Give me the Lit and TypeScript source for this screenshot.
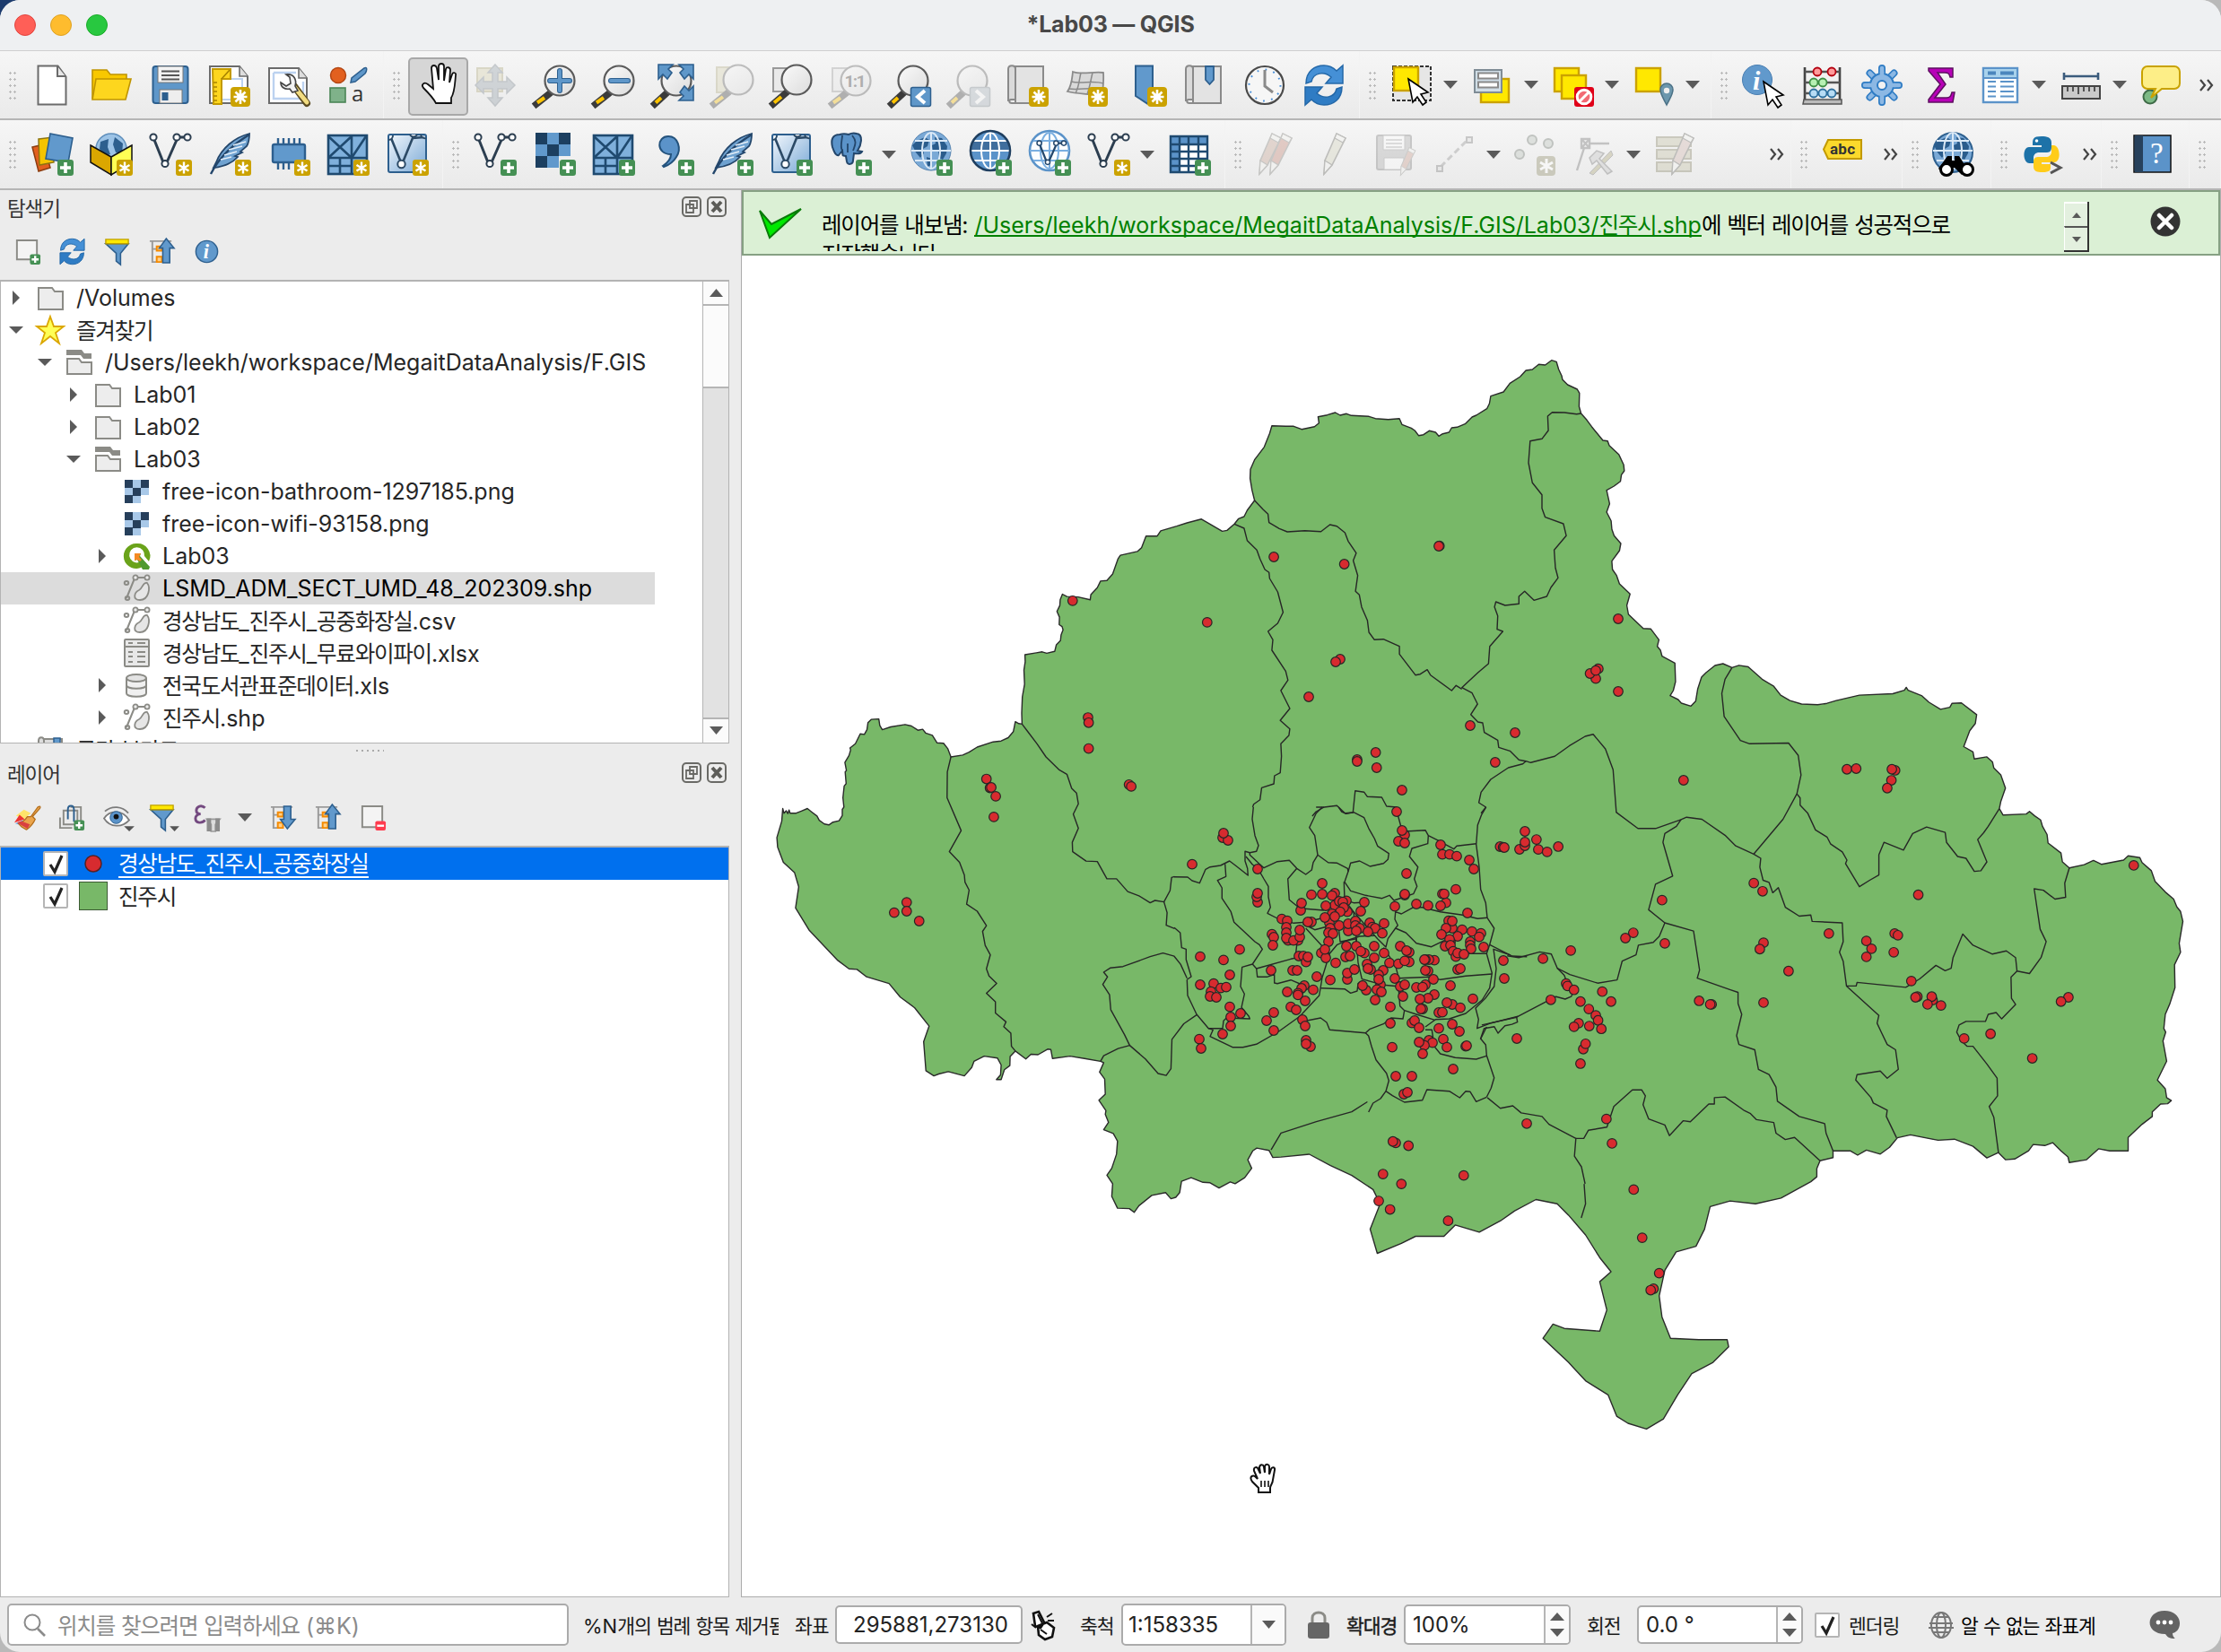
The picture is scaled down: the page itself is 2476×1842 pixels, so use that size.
import { LitElement, html, svg, css } from "lit";
import { customElement } from "lit/decorators.js";

/* ---------- text helper: Hangul runs get their own metrics ---------- */
const ko = (s: string) =>
  s.split(/([\u3131-\uD79D]+)/).filter(Boolean).map((p) => (/[\u3131-\uD79D]/.test(p) ? html`<span class="k">${p}</span>` : p));

/* ---------- badges ---------- */
const plus = svg`<g><rect x="30" y="30" width="18" height="18" rx="3" fill="#459054"/><path d="M39 33v12M33 39h12" stroke="#fff" stroke-width="3.6"/></g>`;
const star = svg`<g><rect x="30" y="30" width="18" height="18" rx="3" fill="#cba200"/><path d="M39 32.5v13M33.5 36l11 6.500M44.500 36l-11 6.500" stroke="#fff" stroke-width="2.400"/></g>`;
const bigStar = svg`<g><rect x="25" y="26" width="22" height="22" rx="4" fill="#cba200"/><circle cx="36" cy="37" r="4" fill="#fff"/><path d="M36 29v4M36 41v4M28.500 37h4M39.500 37h4M30.500 31.500l3 3M38.500 39.500l3 3M41.500 31.500l-3 3M33.500 39.500l-3 3" stroke="#fff" stroke-width="2.600"/></g>`;

const lens = (inner: unknown = "", cx = 30, cy = 19) => svg`
  <path d="M${cx - 11} ${cy + 14}L4 45" stroke="#3b3b3b" stroke-width="7.500" stroke-linecap="square"/>
  <path d="M${cx - 17} ${cy + 19}L5 43.500" stroke="#ffc400" stroke-width="4"/>
  <circle cx="${cx}" cy="${cy}" r="16.500" fill="url(#lensg)" stroke="#5a5a5a" stroke-width="2.200"/>${inner}`;
const veeLine = (c = "#2c3e50") => svg`
  <path d="M6 8L16 33M20 33L31 8M31 5h9" stroke="${c}" stroke-width="3" fill="none"/>
  <g fill="#fff" stroke="${c}" stroke-width="2"><circle cx="5" cy="5" r="3.600"/><circle cx="31" cy="5" r="3.600"/><circle cx="43" cy="5" r="3.600"/><circle cx="18" cy="34.500" r="3.600"/></g>`;
const feather = svg`
  <path d="M46 1C30 5 15 17 9 33l-3 6c9-1 20-4 27-12l-3-1 8-4-2-1 7-6C46 10 46 5 46 1z" fill="#6fa2d0" stroke="#23466b" stroke-width="1.800"/>
  <path d="M46 2C28 13 12 28 3 46" stroke="#23466b" stroke-width="2.400" fill="none"/>
  <path d="M18 25l14-4M23 19l15-4M28 14l14-4M14 30l12-3" stroke="#e4eef8" stroke-width="1.600"/>`;
const mesh = svg`
  <rect x="2" y="3" width="43" height="43" fill="#7fb0dc" stroke="#1f4a70" stroke-width="2.600"/>
  <path d="M2 28h43M28 3v43M2 4l26 24M28 4L2 28M44 4L28 28M15 28v18M2 37h26" stroke="#1f4a70" stroke-width="2.600" fill="none"/>`;
const boxVee = svg`<rect x="3" y="2" width="42" height="42" rx="2" fill="url(#bluebox)" stroke="#2d5f8e" stroke-width="2"/>
  <path d="M6 6l11 27M19 33L30 6l13-1" stroke="#2c4a66" stroke-width="2.600" fill="none"/>
  <g fill="#fff" stroke="#2c4a66" stroke-width="2"><path d="M3 8a5 5 0 005-5M27 2a4.500 4.500 0 008 0M39 2a5 5 0 006 4" /><circle cx="17.500" cy="35" r="4.200"/></g>`;
const globeGrid = (c: string) => svg`<g fill="none" stroke="${c}" stroke-width="2"><ellipse cx="24" cy="20" rx="10" ry="20"/><path d="M24 0v40M2 20h44M6 9h36M6 31h36"/></g>`;
const land = svg`<path d="M8 9l9-4 5 3-2 7-5 3 1 5-4 5-5-6-4-8zM28 5l8 1 6 9-1 8-4 7-4-2-1-7-6-1-1-6 4-2zM19 27l6 2-1 7-4 2z" fill="#2a5c8c"/>`;
const recycle = svg`
  <path d="M4 22C4 8 14 2 24 2c7 0 11 3 14 6l7-6v20H26l6-7c-8-7-20-5-22 5z" fill="#4590d6" stroke="#2468a8" stroke-width="1.500"/>
  <path d="M44 26c0 14-10 20-20 20-7 0-11-3-14-6l-7 6V26h19l-6 7c8 7 20 5 22-5z" fill="#2f7cc4" stroke="#2468a8" stroke-width="1.500"/>`;
const scroll = svg`<path d="M10 3h31v41H10z" fill="#e3e3e3" stroke="#8a8a8a" stroke-width="2"/><path d="M2 42V6c0-5 8-5 8 0v34H5c-2 0-3 4 1 4h6" fill="#dadada" stroke="#8a8a8a" stroke-width="2"/>`;
const cursor = (x: number, y: number) => svg`<path transform="translate(${x} ${y})" d="M0 0l22 15-8 2 6 9-4 3-6-9-5 6z" fill="#fff" stroke="#000" stroke-width="1.600"/>`;
const hourPencil = (x: number, c: string) => svg`<path transform="translate(${x} 0)" d="M18 1l10 5-15 30-9 10 1-15z" fill="${c}" stroke="#8b8b86" stroke-width="1.600"/><path transform="translate(${x} 0)" d="M18 1l-2 5 9 5 3-5zM5 31l-1 15 9-10z" fill="#f3f3f0" stroke="#8b8b86" stroke-width="1.200"/>`;

const icons: Record<string, unknown> = {
  newdoc: svg`<path d="M8.500 2.500h22l9 12v31h-31z" fill="#fff" stroke="#6b6b6b" stroke-width="2"/><path d="M30 3v11h9" fill="#e6e6e6" stroke="#6b6b6b" stroke-width="2"/>`,
  open: svg`<path d="M3 7h16l4 5h18v8H8L3 39z" fill="#f8c800" stroke="#bf9400" stroke-width="1.600"/><path d="M7 17h39l-6 23H3z" fill="#fdd61e" stroke="#bf9400" stroke-width="1.600"/>`,
  save: svg`<rect x="4.500" y="3" width="39" height="41" rx="3" fill="#5f97c9" stroke="#2d5f8e" stroke-width="2"/><rect x="10" y="3" width="28" height="18" fill="#f3f3f3" stroke="#777"/><path d="M14 8.500h20M14 13h20M14 17.500h20" stroke="#555" stroke-width="2"/><rect x="12" y="29" width="25" height="15" fill="#eee" stroke="#777"/><rect x="14.500" y="32" width="7" height="9" fill="#2d5f8e"/>`,
  layout: svg`<path d="M2 3h33l9 11v30H2z" fill="#fff" stroke="#6b6b6b" stroke-width="2"/><path d="M35 3v11h9" fill="#ddd" stroke="#6b6b6b" stroke-width="1.600"/><path d="M15 17h23v23H15z" fill="none" stroke="#bcd2f0" stroke-width="2"/><path d="M5 6h20v11H15v28H6z" fill="#fdd61e" stroke="#c39a00" stroke-width="2"/><path d="M6 21h4M6 26h4M6 31h4M6 36h4M6 41h4M15 17l9-10" stroke="#a88400" stroke-width="1.600"/>${bigStar}`,
  manager: svg`<path d="M2 5h33l9 11v28H2z" fill="#fff" stroke="#6b6b6b" stroke-width="2"/><path d="M35 5v11h9" fill="#ddd" stroke="#6b6b6b" stroke-width="1.600"/><path d="M7 10h25M7 10v29h33V20" fill="none" stroke="#bcd2f0" stroke-width="2.400"/><path d="M30 25l14 19" stroke="#5b4b20" stroke-width="8" stroke-linecap="round"/><path d="M31 27l13 16" stroke="#f2dc80" stroke-width="5" stroke-linecap="round"/><path d="M15 21l6 4 5-3-1-7-4-3c9-1 12 6 10 13l3 5-6 2-3-4c-6 1-10-2-10-7z" fill="#f2f2f2" stroke="#444" stroke-width="1.600"/>`,
  style: svg`<circle cx="13" cy="13" r="8.500" fill="#e2601f" stroke="#b34714" stroke-width="1.500"/><path d="M42 5c4-2 3 3 1 6L32 20l-5 1 1-5z" fill="#5f97c9" stroke="#2d5f8e" stroke-width="1.500"/><rect x="4" y="27" width="17" height="16" fill="#7fb28a" stroke="#4a8556" stroke-width="1.600"/><text x="28" y="42" font-size="24" fill="#333" font-family="Open Sans,sans-serif">a</text>`,
  hand: svg`<path d="M22 44c-3-6-9-12-14-17-3-4 1-7 5-4l6 5L17 5c0-4 5-4 6 0l2 13V3c0-4 6-4 6 0v16l2-13c1-3 5-2 5 1l-1 14 3-9c1-3 5-2 4 1-1 10-1 19-5 25v6z" transform="translate(2 0)" fill="#fff" stroke="#111" stroke-width="1.800"/>`,
  pansel: svg`<g opacity=".38"><path d="M4 5h28v26H4z" fill="#d8d3b0" stroke="#b1aa80" stroke-width="2"/><path d="M24 1l8 9h-5v10h10v-5l9 9-9 9v-5H27v10h5l-8 9-8-9h5V28H11v5l-9-9 9-9v5h10V10h-5z" fill="#9aa5ae" stroke="#7d8790" stroke-width="1.500"/></g>`,
  zoomin: lens(svg`<path d="M30 8v22M19 19h22" stroke="#2d5f8e" stroke-width="6" stroke-linecap="round"/><path d="M30 8v22M19 19h22" stroke="#5f97c9" stroke-width="4" stroke-linecap="round"/>`),
  zoomout: lens(svg`<path d="M21 19h19" stroke="#2d5f8e" stroke-width="6" stroke-linecap="round"/><path d="M21 19h19" stroke="#5f97c9" stroke-width="4" stroke-linecap="round"/>`),
  zoomfull: svg`${lens("", 28)}<g fill="#5f97c9" stroke="#2d5f8e" stroke-width="1.600"><path d="M8 1h16l-5 5 4 4-5 7-5-5-5 5z"/><path d="M47 1H31l5 5-4 4 5 7 5-5 5 5z"/><path d="M47 41H31l5-5-4-4 5-7 5 5 5-5z"/></g>`,
  zoomsel: svg`<g opacity=".35"><path d="M7 4h26v28H7z" fill="#d8d3b0" stroke="#b1aa80" stroke-width="2"/>${lens("", 31, 18)}</g>`,
  zoomlayer: svg`<path d="M4 5h27v26H4z" fill="#e9e9e9" stroke="#999" stroke-width="2"/>${lens("", 30, 18)}`,
  zoomnative: svg`<g opacity=".35"><path d="M4 5h27v26H4z" fill="#e9e9e9" stroke="#999" stroke-width="2"/>${lens(svg`<text x="17.500" y="26" font-size="19" font-weight="700" fill="#333" font-family="Roboto,sans-serif" textLength="24">1:1</text>`)}</g>`,
  zoomlast: svg`${lens("", 28)}<rect x="25.500" y="26.500" width="22" height="21" rx="2" fill="#5f97c9" stroke="#2d5f8e" stroke-width="1.500"/><path d="M41 30l-8 7 8 7" stroke="#fff" stroke-width="4" fill="none"/>`,
  zoomnext: svg`<g opacity=".35">${lens("", 28)}<rect x="25.500" y="26.500" width="22" height="21" rx="2" fill="#a9b4bd" stroke="#7c868f" stroke-width="1.500"/><path d="M32 30l8 7-8 7" stroke="#fff" stroke-width="4" fill="none"/></g>`,
  newmap: svg`${scroll}${bigStar}`,
  new3d: svg`<path d="M8 9c10 4 24-1 34 1 1 12-2 22 0 28-12-6-26-3-40-7 5-7 5-14 6-22z" fill="#d9d9d9" stroke="#8a8a8a" stroke-width="1.800"/><path d="M17 10c-2 8-2 16-6 23M30 10c-2 8-3 16-6 24M6 20c12 3 24-2 36 2M4 28c12 2 26-3 38 2" fill="none" stroke="#8a8a8a" stroke-width="1.500"/>${bigStar}`,
  bookmark: svg`<path d="M12 2.500h19v31l-6 11L12 36z" fill="#6199cc" stroke="#2d5f8e" stroke-width="2"/>${bigStar}`,
  showbm: svg`${scroll}<path d="M24 3h9v15l-4.500 5L24 18z" fill="#6199cc" stroke="#2d5f8e" stroke-width="1.800"/>`,
  clock: svg`<circle cx="24" cy="24" r="21" fill="#f6f6f6" stroke="#4a4a4a" stroke-width="2.200"/><circle cx="24" cy="24" r="17.500" fill="none" stroke="#4a90d9" stroke-width="2" stroke-dasharray="1.800 7.363"/><path d="M24 7v18l9 7" stroke="#8a8a8a" stroke-width="3" fill="none"/>`,
  refresh: recycle,
  select: svg`<rect x="3" y="3" width="42" height="38" fill="#e6e6e6" stroke="#333" stroke-width="2" stroke-dasharray="4 2"/><rect x="4" y="4" width="27" height="26" fill="#ffe800" stroke="#cba200" stroke-width="2.400"/>${cursor(20, 17)}`,
  selform: svg`<rect x="11" y="17" width="31" height="26" fill="#ffe800" stroke="#cba200" stroke-width="2.400"/><rect x="4" y="7" width="30" height="25" fill="#cfdde6" stroke="#7f8c95" stroke-width="2"/><path d="M8 10.500h22v6H8zM8 20.500h22v6H8z" fill="#fff" stroke="#8a8a8a" stroke-width="2"/>`,
  desel: svg`<rect x="3" y="5" width="27" height="26" fill="#ffe800" stroke="#cba200" stroke-width="2.400"/><rect x="11" y="13" width="27" height="26" fill="#ffe800" stroke="#cba200" stroke-width="2.400"/><rect x="25" y="26" width="22" height="22" rx="3" fill="#e00018"/><circle cx="36" cy="37" r="7.800" fill="#f26a75" stroke="#fff" stroke-width="3"/><path d="M31 42l10-10" stroke="#fff" stroke-width="3"/>`,
  selloc: svg`<rect x="4" y="5" width="27" height="26" fill="#ffe800" stroke="#cba200" stroke-width="2.400"/><path d="M38 46c-4-8-7-12-7-17a7 7 0 0114 0c0 5-3 9-7 17z" fill="#6c97ad" stroke="#4b7186" stroke-width="1.500"/><circle cx="38" cy="30" r="3.200" fill="#eee"/>`,
  identify: svg`<circle cx="17" cy="18" r="16.500" fill="#6199cc" stroke="#4a7fb2"/><text x="12" y="29" font-size="30" font-style="italic" font-weight="700" fill="#fff" font-family="Liberation Serif,serif">i</text>${cursor(24, 20)}`,
  abacus: svg`<path d="M4 4v38M43 4v38" stroke="#444" stroke-width="2.600"/><path d="M4 9h39M4 21h39M4 33h39" stroke="#555" stroke-width="2.400"/><path d="M3 40h42v5H2z" fill="#bbb" stroke="#555" stroke-width="1.500"/><g stroke-width="1.800"><g fill="#ff9b9b" stroke="#b3000f"><circle cx="18" cy="9" r="4.500"/><circle cx="34" cy="9" r="4.500"/></g><g fill="#b7f0b3" stroke="#3f8f45"><circle cx="14" cy="21" r="4.500"/><circle cx="24" cy="21" r="4.500"/></g><g fill="#b7dcf5" stroke="#2d6f9e"><circle cx="14" cy="33" r="4.500"/><circle cx="24" cy="33" r="4.500"/><circle cx="34" cy="33" r="4.500"/></g></g>`,
  gear: svg`<g stroke="#2f7cc4" stroke-width="8" stroke-linecap="round"><path d="M24 5v38M5 24h38M10.500 10.500l27 27M37.500 10.500l-27 27"/></g><g stroke="#8cb8e4" stroke-width="4.600" stroke-linecap="round"><path d="M24 5v38M5 24h38M10.500 10.500l27 27M37.500 10.500l-27 27"/></g><circle cx="24" cy="24" r="13" fill="#8cb8e4" stroke="#2f7cc4" stroke-width="2"/><g stroke="#8cb8e4" stroke-width="4.600"><path d="M24 9v6M24 33v6M9 24h6M33 24h6"/></g><circle cx="24" cy="24" r="5" fill="#f2f2f2" stroke="#2f7cc4" stroke-width="2"/>`,
  sigma: svg`<path d="M10 5h27v10h-3c-1-4-2-5-6-5H20l9 13-12 15h13c4 0 5-2 6-6h3l-2 11H10v-3l13-17L10 8z" fill="#b800b8" stroke="#5d1060" stroke-width="1.500"/>`,
  table: svg`<rect x="5" y="5" width="38" height="38" fill="#fff" stroke="#5b93c9" stroke-width="2.400"/><rect x="6" y="6" width="36" height="9" fill="#a8d2ec"/><path d="M10 10.500h9M24 10.500h15" stroke="#4b86bd" stroke-width="4"/><path d="M5 16h38M10 20h9M24 20h15M10 25.500h9M24 25.500h15M10 31h9M24 31h15M10 36.500h9M24 36.500h15M5 5v38" stroke="#5b93c9" stroke-width="2"/>`,
  ruler: svg`<path d="M5 14h38M5 10v8M43 10v8" stroke="#3b5b7c" stroke-width="2.600"/><rect x="3" y="25" width="42" height="14" fill="#c9c9c9" stroke="#444" stroke-width="2"/><path d="M9 25v6M15 25v6M21 25v9M27 25v6M33 25v6M39 25v6" stroke="#444" stroke-width="1.800"/>`,
  tip: svg`<circle cx="11" cy="37" r="7.500" fill="#7cb985" stroke="#3f6b48" stroke-width="2"/><path d="M8 3h30a6 6 0 016 6v13a6 6 0 01-6 6H24L12 38l5-10H8a6 6 0 01-6-6V9a6 6 0 016-6z" fill="#fdee87" stroke="#c9a200" stroke-width="2"/>`,
  /* second row */
  layers: svg`<path d="M2 16l13-3 7 26-13 4z" fill="#e2601f" stroke="#8c3d10" stroke-width="1.500"/><path d="M9 7l16-2 1 28-16 3z" fill="#f5c400" stroke="#8c7410" stroke-width="1.500"/><path d="M22 1l25 5-5 27-25-4z" fill="#6199cc" stroke="#2d5f8e" stroke-width="1.600"/>${plus}`,
  geopkg: svg`<circle cx="24" cy="18" r="17" fill="#9cc3e6" stroke="#5f8fbc" stroke-width="1.500"/><path d="M12 10l9-3-1 9 3 8-6 2-6-8zM28 5l9 7-1 12-7-2-3-9z" fill="#2d5f8e"/><path d="M1 14l23 13v20L1 33z" fill="#dba700" stroke="#111" stroke-width="1.500"/><path d="M47 14L24 27v20l23-14z" fill="#ffff55" stroke="#111" stroke-width="1.500"/>${star}`,
  newshp: svg`${veeLine()}${star}`,
  newspat: svg`${feather}${star}`,
  memory: svg`<path d="M12 6v8M18 6v8M24 6v8M30 6v8M36 6v8M12 33v8M18 33v8M24 33v8" stroke="#2d5f8e" stroke-width="2.400"/><rect x="6" y="13" width="36" height="20" rx="2" fill="#6199cc" stroke="#2d5f8e" stroke-width="2.400"/>${star}`,
  newmesh: svg`${mesh}${star}`,
  newgpx: svg`${boxVee}${star}`,
  addvec: svg`${veeLine()}${plus}`,
  addras: svg`<path d="M3 0h39v26H29v13H3z" fill="#6199cc"/><path d="M3 0h13v13H3zM29 0h13v13H29zM16 13h13v13H16zM3 26h13v13H3z" fill="#1c3f60"/>${plus}`,
  addmesh: svg`${mesh}${plus}`,
  addcsv: svg`<path d="M19 4c11 0 15 14 9 23-3 5-8 9-14 11l-1-1c6-4 9-9 9-13C5 24 6 4 19 4z" transform="translate(0 0)" fill="#5b93c9" stroke="#23527c" stroke-width="2"/>${plus}`,
  addspat: svg`${feather}${plus}`,
  addvt: svg`${boxVee}${plus}`,
  addpg: svg`<path d="M12 2c-8 0-10 6-8 14 2 6 4 10 7 9l4-5c1 6-1 5 4 6l1 6c1 5 7 3 7-1l1-8c6 1 8 0 9-2l-5-1c4-6 7-18-1-19-4-1-7 0-9 1-3-1-7-1-10 0z" fill="#5b93c9" stroke="#23466b" stroke-width="2"/><path d="M15 20c-3-5 0-12 0-17M27 20c2-6 5-10-1-17M21 12v10" fill="none" stroke="#23466b" stroke-width="1.800"/>${plus}`,
  addwms: svg`<circle cx="24" cy="20" r="22" fill="#7aa9d6" stroke="#5784b0"/>${land}${globeGrid("#dbe9f6")}${plus}`,
  addwcs: svg`<circle cx="24" cy="20" r="22" fill="#5b93c9"/><path d="M24 0v40M4 9h40v11H2z" fill="#2a5078" opacity=".55"/>${globeGrid("#fff")}<circle cx="24" cy="20" r="22" fill="none" stroke="#1f3f60" stroke-width="2.600"/>${plus}`,
  addwfs: svg`<circle cx="24" cy="20" r="22" fill="#fbfdff" stroke="#5b93c9" stroke-width="2.600"/>${globeGrid("#7aaee0")}<g transform="translate(9 8) scale(.72)">${veeLine("#23466b")}</g>${plus}`,
  addvirt: svg`${veeLine()}${star}`,
  addgrid: svg`<rect x="3" y="4" width="41" height="40" fill="#fff"/><path d="M3 4h41v9H13v31H3z" fill="#5b93c9"/><path d="M3 4h41v40H3zM3 13h41M3 21h41M3 29h41M3 37h41M13 4v40M23 4v40M34 4v40" fill="none" stroke="#1f4a70" stroke-width="2.400"/>${plus}`,
  pencils: svg`<g opacity=".4">${hourPencil(0, "#c9a99a")}${hourPencil(12, "#c98f80")}</g>`,
  pencil: svg`<g opacity=".5">${hourPencil(6, "#dcdccb")}</g>`,
  savedits: svg`<g opacity=".35"><rect x="3" y="3" width="38" height="38" rx="2" fill="#aaa" stroke="#777" stroke-width="2"/><path d="M10 3h24v16H10zM11 28h22v13H11z" fill="#fff" stroke="#888"/><path d="M13 8h18M13 12h18M13 16h18" stroke="#666"/><g transform="translate(24 16) scale(.68)">${hourPencil(4, "#c99a8a")}</g></g>`,
  addline: svg`<g opacity=".4"><path d="M8 38L38 8" stroke="#9a9a9a" stroke-width="3" stroke-dasharray="7 4"/><path d="M4 37h6v6H4zM37 5h6v6h-6z" fill="#ddd" stroke="#888" stroke-width="2"/></g>`,
  pts: svg`<g opacity=".5"><g fill="#c9cfc9" stroke="#8f958f" stroke-width="2"><circle cx="20" cy="8" r="5"/><circle cx="38" cy="12" r="5"/><circle cx="6" cy="24" r="5"/></g><rect x="25" y="26" width="21" height="22" rx="4" fill="#a9a78c"/><path d="M36 29v16M29 33l14 8M43 33l-14 8" stroke="#fff" stroke-width="3"/></g>`,
  vertex: svg`<g opacity=".45"><path d="M9 7h9v10H9zM9 7l9 10M18 7L9 17M18 12h22M12 17L4 42" fill="none" stroke="#8b8b8b" stroke-width="2.400"/><path d="M42 20L18 45l4 2 22-22z" fill="#b9b48f" stroke="#888"/><path d="M18 28l8-8 8 3-5 6 14 14-5 3-12-15-5 4z" fill="#ccc" stroke="#888" stroke-width="1.500"/></g>`,
  multi: svg`<g opacity=".5"><path d="M3 5h38v10H3zM3 19h38v10H3zM3 33h38v10H3z" fill="#cfcdb8" stroke="#a3a08a" stroke-width="2"/>${hourPencil(16, "#d9c5bf")}</g>`,
  abc: svg`<path d="M9 8h37v21H9L4 18.500z" fill="#fbd92c" stroke="#c39a00" stroke-width="2"/><text x="11" y="24" font-size="17" font-weight="700" fill="#333" font-family="Roboto,sans-serif" textLength="28">abc</text>`,
  binoc: svg`<circle cx="24" cy="22" r="22" fill="#7aa9d6" stroke="#2d5f8e" stroke-width="2"/>${land}${globeGrid("#dbe9f6")}<path d="M18 26h5v5h3v-5h5l9 14-6 7-8-8h-4l-8 8-6-7z" fill="#000"/><circle cx="17" cy="41" r="6.500" fill="#fff" stroke="#000" stroke-width="3"/><circle cx="40" cy="41" r="6.500" fill="#fff" stroke="#000" stroke-width="3"/>`,
  python: svg`<path d="M24 4c-10 0-10 3-10 10h10v2H10C2 16 3 35 11 34h4v-6c0-4 3-6 6-6h9c4 0 5-3 5-6v-5c0-6-5-7-11-7z" fill="#1d72a8"/><circle cx="18.500" cy="9" r="1.800" fill="#fff"/><path d="M25 44c10 0 9-3 9-9H24v-2h14c8 0 7-18 0-19h-3v7c0 4-3 6-6 6h-9c-4 0-5 3-5 6v5c0 5 4 6 10 6z" fill="#ffcc1a"/><path d="M34 33l11 6-11 6" stroke="#555" stroke-width="3" fill="none"/>`,
  help: svg`<rect x="4" y="3" width="41" height="41" fill="#5b93c9" stroke="#111" stroke-width="1.500"/><rect x="5" y="3" width="9" height="41" fill="#27415c"/><text x="22" y="34" font-size="33" fill="#fff" font-family="Liberation Serif,serif">?</text>`,
  /* panel icons, 32 px grid */
  pAdd: svg`<path d="M4 3h23v22H4z" fill="#f4f4f4" stroke="#8b8b86" stroke-width="2" transform="scale(1 1)"/><rect x="19" y="19" width="12" height="12" rx="2" fill="#459054"/><path d="M25 21v8M21 25h8" stroke="#fff" stroke-width="2.400"/>`,
  pRefresh: svg`<g transform="scale(.667)">${recycle}</g>`,
  pFilter: svg`<path d="M3 7h26l-9 11v13l-5-4v-9z" fill="#6199cc" stroke="#2d5f8e" stroke-width="1.600"/><path d="M3 2h26v5H3z" fill="#ffe800" stroke="#bfa000" stroke-width="1.400"/>`,
  pUp: svg`<path d="M2 4h25M5 4v24h8M5 13h8" stroke="#9a9a9a" stroke-width="2" fill="none"/><path d="M10 10h6v5h-6zM10 22h6v6h-6z" fill="#ffd089" stroke="#f58a00" stroke-width="2"/><path d="M21 1l9 11h-5v17h-8V12h-4z" fill="#6199cc" stroke="#2d5f8e" stroke-width="1.600"/>`,
  pDown: svg`<path d="M2 4h25M5 4v24h8M5 13h8" stroke="#9a9a9a" stroke-width="2" fill="none"/><path d="M10 10h6v5h-6zM10 22h6v6h-6z" fill="#ffd089" stroke="#f58a00" stroke-width="2"/><path d="M21 29l9-11h-5V3h-8v15h-4z" fill="#6199cc" stroke="#2d5f8e" stroke-width="1.600"/>`,
  pInfo: svg`<circle cx="16" cy="16" r="12.500" fill="#6199cc" stroke="#2d5f8e" stroke-width="1.500"/><text x="12" y="24" font-size="23" font-style="italic" font-weight="700" fill="#fff" font-family="Liberation Serif,serif">i</text>`,
  pBrush: svg`<path d="M3 14l9-7 8 4-8 7z" fill="#ffe46a"/><path d="M1 22l6-9 6 5z" fill="#e33"/><path d="M2 23l9-4 5 8z" fill="#62a8e8"/><path d="M28 4c4-2 3 1 2 2l-8 9 3 3c-3 7-6 9-10 12-4-2-7-4-9-7 5-2 8-5 10-8l4 0z" fill="#eba54c" stroke="#b36e1c" stroke-width="1.300"/><path d="M4 22l12 7 3-5-10-4z" fill="#d94040"/>`,
  pGroup: svg`<path d="M2 16v12h14M6 8v16h16V8zM14 4h12v16" fill="none" stroke="#8b8b86" stroke-width="2"/><path d="M11 18V7c0-6 7-6 7 0v14" fill="none" stroke="#2d5f8e" stroke-width="2"/><rect x="18" y="19" width="12" height="12" rx="2" fill="#459054"/><path d="M24 21v8M20 25h8" stroke="#fff" stroke-width="2.400"/>`,
  pEye: svg`<path d="M1 17C8 7 22 7 30 19c-8 9-22 9-29-2z" fill="#fff" stroke="#7b7b7b" stroke-width="1.800"/><path d="M2 9C10 2 22 3 29 11" fill="none" stroke="#7b7b7b" stroke-width="1.800"/><circle cx="15" cy="16" r="7" fill="#5b93c9" stroke="#2d5f8e"/><circle cx="15" cy="15" r="3" fill="#111"/><path d="M24 26h12l-6 6z" fill="#555"/>`,
  pFilter2: svg`<path d="M3 7h26l-9 11v13l-5-4v-9z" fill="#6199cc" stroke="#2d5f8e" stroke-width="1.600"/><path d="M3 2h26v5H3z" fill="#ffe800" stroke="#bfa000" stroke-width="1.400"/><path d="M25 26h11l-5.500 6z" fill="#555"/>`,
  pEps: svg`<path d="M14 5c-4-4-10-2-10 3 0 3 2 4 5 4-4 0-6 3-6 5 0 6 8 6 11 2" fill="none" stroke="#744a80" stroke-width="3"/><path d="M16 18h15l-5 6v8h-5v-8z" fill="#ddd" stroke="#999" stroke-width="1.800"/><path d="M16 17h5v15h-5zM26 17h5v15h-5z" fill="#8b8b8b"/>`,
  pRemove: svg`<path d="M4 3h23v24H4z" fill="#f4f4f4" stroke="#8b8b86" stroke-width="2"/><rect x="19" y="20" width="12" height="11" rx="2" fill="#ff3b4e"/><path d="M21 25.500h8" stroke="#fff" stroke-width="2.400"/>`,
  /* tree icons, 32 px grid */
  folder: svg`<path d="M3 5h15l3 4h9v20H3z" fill="#ededed" stroke="#8b8b86" stroke-width="2"/>`,
  folderOpen: svg`<path d="M2 2h17l3 4h8v6H21l-3-4H2z" fill="#8b8b86"/><path d="M3 12h13l3 4h11v13H3z" fill="#ededed" stroke="#8b8b86" stroke-width="2"/>`,
  star: svg`<path d="M16 1l4 11h11l-9 7 4 12-10-8-10 8 4-12-9-7h11z" fill="#ffff55" stroke="#dba700" stroke-width="1.800"/>`,
  raster: svg`<path d="M3 3h27v17H21v9H3z" fill="#a8c8e8"/><path d="M3 3h9v9H3zM21 3h9v9h-9zM12 12h9v9h-9zM3 20h9v9H3z" fill="#263f5b"/>`,
  qgis: svg`<path d="M16 2a14 14 0 107 26l-4-5a8.500 8.500 0 116-7l5 6A14 14 0 0016 2z" fill="#6aa31a"/><path d="M14 13h7l-1 3 11 12-1 3h-7L17 20l-3 1z" fill="#4f9a2e"/><path d="M14 13h7l-2 4 3 3-2 2-3-2-3 1z" fill="#f58a22"/>`,
  shp: svg`<path d="M5 27L14 5M16 4h13M6 29c-3 0-3-4 0-4s3 4 0 4zM5 12c-3 0-3-4 0-4s3 4 0 4z" fill="none" stroke="#8b8b86" stroke-width="2"/><circle cx="15" cy="4" r="2.600" fill="#eee" stroke="#8b8b86" stroke-width="1.800"/><circle cx="28" cy="4" r="2.600" fill="#eee" stroke="#8b8b86" stroke-width="1.800"/><path d="M28 10c4 5 2 19-8 19-9 0-6-9-1-11 4-2 4-9 9-8z" fill="#e6e6e6" stroke="#8b8b86" stroke-width="1.800"/>`,
  xlsx: svg`<rect x="3" y="1" width="27" height="30" rx="1" fill="#e8e8e8" stroke="#8b8b86" stroke-width="2"/><path d="M3 9h27M7 5h5M17 5h9M7 15h5M17 15h9M7 20h5M17 20h9M7 26h5M17 26h9" stroke="#8b8b86" stroke-width="2"/>`,
  db: svg`<path d="M5 8v17c0 5 22 5 22 0V8" fill="#f0f0f0" stroke="#8b8b86" stroke-width="2"/><ellipse cx="16" cy="8" rx="11" ry="4" fill="#e3e3e3" stroke="#8b8b86" stroke-width="2"/><path d="M5 16c0 5 22 5 22 0" fill="none" stroke="#8b8b86" stroke-width="2"/>`,
  bm: svg`<path d="M4 4h25v25H4z" fill="#ddd" stroke="#8b8b86" stroke-width="2"/><path d="M3 28V6c0-5 6-5 6 0v20" fill="#ddd" stroke="#8b8b86" stroke-width="2"/><path d="M20 3h7v14h-7z" fill="#6199cc" stroke="#2d5f8e" stroke-width="1.500"/>`,
};
const icon = (n: string, size = 48, box = 48) => html`<svg class="ic" width="${size}" height="${size}" viewBox="0 0 ${box} ${box}">${icons[n]}</svg>`;

/* ---------- toolbars: "v" is a drop-down arrow ---------- */
interface Bar { w?: number; items: string[]; more?: boolean; narrow?: boolean; }
const row1: Bar[] = [
  { items: ["newdoc", "open", "save", "layout", "manager", "style"] },
  { items: ["hand", "pansel", "zoomin", "zoomout", "zoomfull", "zoomsel", "zoomlayer", "zoomnative", "zoomlast", "zoomnext", "newmap", "new3d", "bookmark", "showbm", "clock", "refresh"] },
  { items: ["select", "v", "selform", "v", "desel", "v", "selloc", "v"] },
  { w: 568, items: ["identify", "abacus", "gear", "sigma", "table", "v", "ruler", "v", "tip"], more: true },
];
const row2: Bar[] = [
  { items: ["layers", "geopkg", "newshp", "newspat", "memory", "newmesh", "newgpx"] },
  { items: ["addvec", "addras", "addmesh", "addcsv", "addspat", "addvt", "addpg", "v", "addwms", "addwcs", "addwfs", "addvirt", "v", "addgrid"] },
  { w: 631, items: ["pencils", "pencil", "savedits", "addline", "v", "pts", "vertex", "v", "multi"], more: true },
  { w: 124, items: ["abc"], more: true, narrow: true },
  { w: 99, items: ["binoc"], narrow: true },
  { w: 123, items: ["python"], more: true, narrow: true },
  { w: 98, items: ["help"], narrow: true },
  { w: 35, items: [] },
];

interface Node { d: number; a?: "r" | "d"; i: string; t: string; sel?: boolean; }
const tree: Node[] = [
  { d: 0, a: "r", i: "folder", t: "/Volumes" },
  { d: 0, a: "d", i: "star", t: "즐겨찾기" },
  { d: 1, a: "d", i: "folderOpen", t: "/Users/leekh/workspace/MegaitDataAnalysis/F.GIS" },
  { d: 2, a: "r", i: "folder", t: "Lab01" },
  { d: 2, a: "r", i: "folder", t: "Lab02" },
  { d: 2, a: "d", i: "folderOpen", t: "Lab03" },
  { d: 3, i: "raster", t: "free-icon-bathroom-1297185.png" },
  { d: 3, i: "raster", t: "free-icon-wifi-93158.png" },
  { d: 3, a: "r", i: "qgis", t: "Lab03" },
  { d: 3, i: "shp", t: "LSMD_ADM_SECT_UMD_48_202309.shp", sel: true },
  { d: 3, i: "shp", t: "경상남도_진주시_공중화장실.csv" },
  { d: 3, i: "xlsx", t: "경상남도_진주시_무료와이파이.xlsx" },
  { d: 3, a: "r", i: "db", t: "전국도서관표준데이터.xls" },
  { d: 3, a: "r", i: "shp", t: "진주시.shp" },
  { d: 0, i: "bm", t: "공간 북마크" },
];

/* ---------- map geometry: each sheet has its own local units ---------- */
const sheets: Record<string, [number, number, number, number]> = {
  A: [860, 560, 2.8, 1.9122],
  B: [1310, 900, 3, 3],
  C: [1370, 390, 2.8, 3],
  D: [1640, 700, 1.9358, 2.529],
  T: [0, 0, 0.63328, 0.63328],
};
const pts = (s: string, d: string): number[][] => {
  const [ox, oy, sx, sy] = sheets[s];
  return d.trim().split(/\s+/).map((p) => { const [x, y] = p.split(",").map(Number); return [ox + x / sx, oy + y / sy]; });
};
const toPath = (p: number[][]) => "M" + p.map((q) => q[0].toFixed(1) + " " + q[1].toFixed(1)).join("L");

const outer: [string, string][] = [
  ["A", "38,653 42,663 49,658 54,664 58,656 61,663 80,663 98,658 115,653 128,660 145,669 152,678 168,686 182,688 195,682 214,679 224,668 224,655 229,650 226,630 230,605 236,600 233,575 237,572 232,555 245,540 250,528 248,524 265,515 280,494 293,495 301,485 304,470 315,463 338,462 341,476 349,485 375,479 420,474 440,477 460,486 475,484 484,492 505,497 520,513 540,514 553,525 563,543 600,539 620,533 645,522 695,511 720,509 742,502 758,489 764,468 775,472 785,473 784,450 786,415 793,388 791,358 795,340 794,325 830,321 848,319 862,322 887,318 892,304 905,295 907,283 913,272 910,265 901,261 902,245 894,233 903,220 904,208 911,196 925,201 960,202 998,208 1000,197 1020,182 1030,168 1050,167 1068,153 1085,120 1092,113 1145,105 1158,97 1172,72 1207,72 1218,61 1268,51 1300,44 1345,36 1380,50 1410,62 1425,60"],
  ["C", "20,583 33,565 50,558 60,537 83,504 75,470 69,430 70,400 83,368 113,325 130,280 137,254 180,256 205,256 230,266 270,257 284,245 281,224 310,218 335,210 350,219 370,214 385,220 440,223 460,230 500,233 535,230 543,250 572,262 583,270 595,287 610,284 628,271 648,276 658,289 670,281 690,276 698,261 715,259 740,248 762,225 775,219 808,197 816,180 820,155 860,141 880,112 912,90 930,69 950,66 970,49 990,51 1010,35 1025,40 1032,65 1042,88 1044,100 1060,117 1090,132 1097,145 1096,190 1102,213 1120,235 1135,257 1170,303 1185,305 1190,320 1220,350 1235,385 1237,405 1228,418 1225,440 1205,456 1182,470 1191,515 1182,543 1196,572 1198,600 1205,622 1226,648 1222,672 1198,707 1200,735 1213,755 1222,783 1255,817 1245,855 1250,885 1296,932 1320,934 1345,970 1340,992 1350,1005 1355,1025 1395,1048 1397,1110 1390,1140 1380,1157 1405,1170 1415,1182 1445,1192 1460,1175 1466,1135 1478,1095 1492,1080 1520,1056 1545,1050"],
  ["D", "565,112 580,106 600,110 630,145 655,165 670,190 690,205 715,215 750,217 770,213 790,205 840,190 912,186 937,176 941,168 945,176 975,192 990,210 1015,230 1035,224 1040,213 1060,212 1093,245 1090,270 1078,290 1065,335 1085,350 1088,370 1115,364 1127,378 1130,395 1145,415 1155,452 1145,490 1142,510 1150,528 1200,525 1207,518 1218,530 1231,542 1235,560 1245,583 1247,607 1275,635 1278,660 1293,677 1325,668 1345,656 1362,667 1410,655 1420,643 1445,648 1450,662 1470,685 1478,715 1500,745 1518,765 1525,787 1533,800 1538,828 1530,890 1533,915 1520,950 1521,1015 1510,1060 1500,1090 1497,1130 1501,1140 1495,1165 1503,1222 1483,1275 1500,1300 1503,1325 1513,1333 1505,1342 1490,1343 1472,1365 1472,1378 1450,1400 1420,1437 1420,1475 1380,1475 1356,1469 1330,1500 1293,1508 1290,1492 1275,1475 1257,1452 1240,1460 1215,1457 1205,1475 1175,1498 1155,1500 1140,1480 1115,1495 1085,1462 1045,1442 1010,1445 950,1430 922,1438 905,1465 885,1484 855,1473 836,1487 820,1475 783,1475 783,1494 755,1503 748,1525 748,1548 735,1562"],
  ["T", "1258,846 1240,850 1222,848 1208,852 1204,868 1198,880 1184,884 1176,897 1172,915 1174,930 1180,945 1200,946 1220,946 1221,951 1210,962 1195,970 1185,985 1175,1002 1163,1009 1150,1005 1142,1000 1136,985 1120,975 1108,962 1090,945 1097,935 1105,938 1130,940 1135,925 1130,905 1138,898 1130,888 1120,872 1108,858 1100,850 1085,847 1070,855 1060,862 1045,870 1028,865 1020,873 1000,873 990,878 973,885 968,868 975,850 970,840 955,830 940,823 925,815 905,817"],
  ["A", "1568,1397 1556,1382 1518,1377 1505,1383 1490,1402 1502,1420 1480,1440 1450,1453 1435,1449 1400,1462 1372,1451 1350,1450 1313,1440 1283,1448 1277,1472 1265,1482 1250,1485 1233,1472 1190,1478 1150,1500 1135,1514 1120,1506 1083,1505 1065,1480 1068,1453 1050,1435 1065,1420 1080,1390 1083,1362 1070,1346 1040,1338 1055,1322 1045,1305 1047,1297 1025,1275 1045,1262 1043,1230 1027,1215 1040,1195 1030,1192 980,1186 935,1181 880,1186 875,1167 865,1166 835,1178 813,1177 797,1187 764,1170 748,1182 747,1201 730,1210 720,1231 705,1231 718,1221 720,1200 708,1185 667,1181 635,1192 628,1205 605,1223 555,1214 525,1219 510,1223 485,1212 478,1150 495,1117 450,1078 405,1055 370,1026 300,1012 270,996 245,995 210,977 120,912 78,865 88,820 75,790 40,768 22,735 20,715 35,680"],
];
const borders: [string, string][] = [
  ["A", "563,543 552,575 551,630 595,700 558,745 590,768 605,795 607,810 620,827 612,857 645,872 674,903 662,915 670,945 686,965 674,995 682,1010 706,1026 674,1047 702,1065 702,1089 735,1108 728,1118 750,1132 752,1160 764,1170"],
  ["A", "785,473 802,488 832,515 860,543 900,570 925,580 940,610 955,620 961,643 945,665 961,695 942,725 943,745 985,765 1020,766 1050,803 1080,803 1115,830 1150,839 1185,854 1200,849 1228,852 1247,828 1252,800 1261,798"],
  ["A", "1228,852 1238,875 1235,902 1261,909"],
  ["A", "1300,1015 1280,985 1260,968 1225,961 1185,969 1100,990 1060,993 1040,1002 1052,1012 1037,1028 1058,1050 1062,1082 1105,1135 1121,1158 1085,1165 1040,1180 1030,1192"],
  ["A", "1121,1158 1170,1187 1210,1218 1235,1222 1250,1208 1253,1145 1290,1112 1330,1093"],
  ["B", "0,233 45,234 60,246 85,254 105,208 120,200 155,195 185,180 205,195 247,228 245,205 237,180 237,148 253,152 275,148 282,128 270,95 261,40 265,0"],
  ["B", "253,152 253,160 285,190 300,203 345,182 385,178 410,205 440,225 460,210 465,185 480,160 470,95 452,68 475,20 495,0"],
  ["B", "240,165 262,192 280,205 300,240 315,265 315,300 322,335 312,355 345,372 400,388 440,385 500,370"],
  ["B", "43,577 45,630 75,693 115,740 162,740 165,715 175,705 253,708 250,700 225,670 235,625 222,600 227,535 262,525 295,475 285,460 270,450 200,385 190,350 160,305 160,270 145,245 173,232 170,190"],
  ["B", "115,740 130,745 120,767 195,803 230,803 275,793 350,750 420,700 485,630 495,570 520,490 545,460 580,445 620,432 670,430"],
  ["B", "0,403 20,420 25,470 40,475 40,510 57,567 43,577"],
  ["B", "262,525 275,540 390,508 405,505 410,460 400,440"],
  ["B", "275,540 278,568 310,568 335,560 335,588 345,590 390,578 435,597"],
  ["B", "410,205 380,240 385,310 420,338 500,345"],
  ["B", "480,160 515,185 545,187 580,205 582,215 570,250 590,280 640,295 695,305 720,295 735,312 770,300 800,290 812,265 803,240 815,200 787,165 795,138 848,122 850,95 840,77 785,80 762,78 745,15"],
  ["B", "550,0 560,15 575,22 600,17 635,35 650,70 670,105 680,130 718,155 715,175 700,188 655,198 620,180 590,187 582,215"],
  ["B", "850,95 880,110 935,140 945,130 1010,122"],
  ["B", "568,250 570,310 600,350 608,430 615,520 628,575 700,595 755,600"],
  ["B", "490,605 570,608 590,622 612,615 615,590 630,580"],
  ["B", "430,390 470,410 510,400 M"].slice(0, 1).concat("430,390 470,410 510,400") as [string, string],
  ["B", "440,405 500,470 520,490"],
  ["B", "570,310 600,320 640,318"],
  ["B", "520,325 560,345 600,350 640,395 680,440 708,468 715,440 740,405 748,395 738,375 740,350 760,357 800,335 830,335 890,350 960,360 1015,373 1047,370"],
  ["B", "740,405 775,420 810,455 860,467 905,445"],
  ["B", "950,490 1045,490"],
  ["B", "550,400 555,450 610,440 607,460"],
  ["B", "700,470 740,530 748,560 750,600 755,665 770,680 765,708 725,705 700,725 655,742 640,755 520,745 510,720 490,705 440,715"],
  ["B", "770,680 810,693 872,712 840,735"],
  ["B", "750,572 860,568 890,577 975,565 1063,558"],
  ["B", "640,755 650,765 660,800 675,845 710,890 718,915 708,950 690,975 665,990 650,1020"],
  ["B", "708,950 730,965 770,987 830,980 845,945 920,950 955,972 975,950 990,952 1010,985 1045,970"],
  ["B", "1045,970 1060,940 1070,905 1045,830 1042,795 1025,775 1045,735"],
  ["B", "1045,832 1010,843 940,838 890,825 870,800 862,745 840,745"],
  ["B", "872,710 920,708 975,690 1030,645 1055,605 1063,555 1045,490 1055,460 1070,405 1047,370 1042,320 1025,275 1020,200 1010,125 1015,60 1028,25 1043,0"],
  ["B", "1055,460 1130,498 1180,500"],
  ["B", "1125,495 1068,475 1077,540 1070,600 1040,640 1008,672 1018,710 1013,740 1060,722 1150,700"],
  ["C", "20,583 50,597 60,638 90,670 100,700 115,735 128,745 130,765 155,810 172,878 155,915 125,942 140,970 137,1005 180,1075 187,1105 165,1140 193,1200 163,1240 193,1268 190,1290 165,1318 167,1360 163,1415 145,1425 143,1452 105,1465 100,1505 80,1520 77,1530"],
  ["C", "83,504 110,535 125,550 128,578 160,598 185,609 240,605 290,608 318,585 340,590 365,612 375,640 400,680 391,705 405,755 398,808 410,820 417,860 435,905 440,945 457,970 485,968 535,992 535,1018 585,1088 600,1085 622,1070 632,1088 698,1140 712,1123 730,1135"],
  ["C", "1102,213 1088,215 1050,210 1012,209 998,222 1000,270 980,298 943,305 938,378 950,445 980,485 980,530 990,560 1047,582 1056,622 1018,670 1022,730 1030,763 1008,795 995,825 955,838 926,808 908,825 908,850 865,855 836,843 832,860 842,890 840,935 858,942 817,992 813,1050 780,1080 730,1130 762,1148 779,1185 758,1220 780,1245 795,1248 800,1280 842,1306 845,1330 880,1342 908,1372 930,1376 945,1381 1020,1360 1065,1325 1115,1293 1140,1286 1178,1335 1202,1405 1212,1548"],
  ["C", "930,1376 920,1385 875,1398 820,1437 790,1480 783,1515 805,1530 790,1550"],
  ["C", "275,1530 300,1530 340,1525 365,1550 390,1548 397,1475 425,1480 435,1495 480,1497 495,1527 526,1530"],
  ["C", "263,1560 275,1545 300,1530"],
  ["D", "315,520 362,566 400,566 455,541 467,534 500,540 550,585 573,615 612,638 675,540 705,468 714,415 708,360 687,325 603,327 583,318 548,250 543,185 550,145 565,112"],
  ["D", "455,541 445,560 420,580 416,605 437,700 400,723 385,795 420,832 482,855 495,965 490,988 560,1020 578,1028 578,1060 586,1090 575,1150 580,1175 614,1190 622,1245 645,1260 660,1295 663,1335 710,1378 765,1398 768,1425 783,1475"],
  ["D", "420,832 408,870 395,887 363,895 358,922 328,940 317,993 275,1002 215,978 188,960 175,920 150,914 105,930 80,925"],
  ["D", "612,638 627,650 625,675 632,712 645,718 653,747 665,733 680,788 710,813 735,810 738,828 803,832 805,885 797,915 805,940 812,1010 882,1093 878,1115 887,1140 900,1175 918,1190 924,1245 900,1270 885,1250 835,1260 832,1275 865,1325 870,1340 900,1360 898,1378 920,1438"],
  ["D", "705,468 712,480 712,500 728,522 745,570 770,590 778,610 803,632 813,655 810,665 840,730 862,712 882,697 882,640 893,605 935,627 955,580 985,562 1025,577 1028,605 1052,645 1070,650 1088,687 1102,685 1115,660 1095,597 1108,578 1118,560 1142,510"],
  ["D", "1293,677 1283,720 1285,760 1262,765 1237,740 1217,736 1230,850 1243,885 1232,930 1207,975 1180,968 1177,930 1157,911 1127,920 1085,895 1063,864 1042,930 1038,960 1025,967 1005,952 970,990 940,1014 835,1000 833,1010 812,1010"],
  ["D", "1180,968 1167,985 1168,1045 1177,1062 1147,1103 1135,1085 1118,1090 1112,1110 1070,1110 1055,1120 1050,1140 1060,1165 1072,1180 1085,1180 1115,1230 1137,1270 1138,1320 1120,1350 1130,1380 1140,1480"],
  ["D", "37,1325 65,1355 92,1348 110,1368 155,1378 170,1400 228,1440 225,1490 240,1520 248,1568"],
  ["D", "228,1440 245,1440 255,1417 295,1408 310,1350 350,1303 370,1303 378,1320 373,1345 385,1385 420,1402 430,1432 460,1390 475,1393 515,1343 527,1343 527,1325 550,1323 590,1360 605,1370 618,1387 655,1395 660,1425 680,1443 700,1437 755,1503"],
  ["D", "188,960 203,980 210,1005 225,1020 218,1040 205,1047 185,1040 100,1098 60,1110 25,1120"],
  ["D", "100,1098 102,1112 90,1118 75,1122 60,1143 52,1125 30,1130 22,1160"],
  ["T", "1119,836 1120,850 1117,860"],
  ["T", "898,812 905,800 930,792 955,785 966,778"],
];
const dots: [string, string][] = [
  ["A", "943,210 1363,256 991,459 993,470 993,525 1119,602 1126,606 674,590 685,609 689,608 703,627 697,671 425,853 425,872 386,875 464,893"],
  ["C", "660,656 658,657 143,693 363,717 350,1035 336,1044 252,1161 1218,900 1156,1067 1148,1100 1130,1083 1148,1073 1218,1143 756,1257 896,1281 834,1380 461,1347 403,1371 403,1377 464,1398 543,1473 1422,1440"],
  ["D", "143,597 147,625 166,632 190,617 813,399 833,397 917,402 910,399 909,430 900,452 1432,670 612,720 631,743 414,768 352,860 335,875 420,890 217,910 157,933 633,888 625,906 687,968 774,862 633,1057 494,1052 521,1062 518,1062 967,753 916,862 923,867 855,883 866,905 855,928 914,915 952,996 965,1040 961,1042 998,1050 996,1040 987,1062 1016,1065 1291,1042 1275,1054 1123,1145 1066,1158 1213,1214 207,1003 210,1010 224,1021 285,1026 304,1054 238,1054 174,1049 256,1075 271,1093 276,1107 234,1115 224,1125 257,1123 283,1131 244,1188 249,1173 238,1229 122,1398 294,1385 306,1454"],
  ["B", "162,102 180,111 165,87 60,191 279,207 279,318 276,300 279,288 360,374 378,380 375,402 375,420 381,446 375,438 414,446 399,446 420,434 420,411 423,345 426,321 459,293 495,291 495,255 537,288 528,296 537,328 507,330 552,315 576,313 564,317 636,318 624,348 579,350 567,336 555,350 528,357 519,387 504,369 537,366 522,405 516,420 531,423 552,396 582,414 582,390 606,381 606,396 621,405 609,414 654,387 663,401 672,405 648,417 696,422 702,389 459,384 447,384 327,425 333,435 330,462 219,476 87,500 165,511 186,561 132,590 87,594 123,617 120,633 141,636 156,605 174,602 186,668 189,702 189,732 222,690 162,759 84,776 90,807 333,687 309,714 333,747 324,546 396,546 411,546 417,498 432,498 441,518 447,501 492,488 507,504 516,450 504,476 540,521 522,578 477,567 579,576 579,555 603,543 576,465 609,465 573,501 588,498 636,488 624,482 669,465 669,504 702,488 645,525 657,543 648,540 720,521 699,546 684,561 690,594 684,576 678,610 693,618 672,645 642,612 630,597 738,573 750,524 756,465 786,485 777,480 786,518 771,514 870,512 852,510 840,510 837,510 849,548 840,546 867,576 756,600 771,594 765,633 810,603 840,594 831,602 870,627 849,639 822,642 831,675 825,675 924,597 948,543 957,540 930,660 912,654 957,671 885,687 897,686 999,641 723,668 723,723 795,722 804,714 819,738 885,740 930,726 954,750 900,776 912,803 975,800 978,798 852,780 864,788 837,797 819,786 831,825 729,803 933,876 741,900 795,900 768,960 780,954 378,618 435,597 426,606 414,622 414,628 465,611 438,648 390,668 408,678 429,711 438,732 441,780 456,801 441,792 744,15 771,93 762,78 750,114 771,120 777,222 771,294 771,291 738,332 810,324 849,329 909,320 891,330 897,290 903,290 942,275 891,126 897,158 921,158 945,164 987,177 1002,207 981,354 918,380 930,405 930,381 909,405 963,410 894,426 948,432 924,451 921,442 996,416 1026,422 1020,434 990,450 990,462 993,474 1035,468 906,465 924,462 933,482 942,500 948,488 969,492 1101,513 1104,573 1146,774 1090,132 1100,134 1104,135 1155,141 1173,129 1173,117 1173,81"],
  ["T", "986,807 984,806 995,809 977,829 990,836 974,848 982,854 1034,830 1023,862 1154,840 1160,874 1172,899 1168,910 1166,911"],
];

const mapView = () => svg`
  <path class="land" d="${toPath(outer.flatMap(([s, d]) => pts(s, d)))}Z"></path>
  ${borders.map(([s, d]) => svg`<path class="edge" d="${toPath(pts(s, d))}"></path>`)}
  ${dots.flatMap(([s, d]) => pts(s, d)).map(([x, y]) => svg`<circle class="dot" cx="${x}" cy="${y}" r="5.300"></circle>`)}
  <path transform="translate(1394 1632)" d="M10 32v-5L3 20c-4-6 1-8 4-5l2 2L5 8c-1-5 4-5 5-1l2 4-1-7c1-4 5-3 5 0l1 6V3c1-3 5-3 5 1v8l2-6c1-3 5-2 4 1l-2 11c0 4-3 6-3 9v5z" fill="#fff" stroke="#111" stroke-width="2"></path>
  <path transform="translate(1394 1632)" d="M13 19v7M17 19v7M21 19v7" stroke="#111" stroke-width="1.600"></path>`;

const arrow = (d: string, w = 16, h = 12) => html`<svg width="${w}" height="${h}" viewBox="0 0 16 12" preserveAspectRatio="none"><path d="${d === "u" ? "M0 12h16L8 0z" : "M0 0h16L8 12z"}" fill="#5a5a5a"/></svg>`;
const box2 = html`<span class="tbtns"><svg width="22" height="23" viewBox="0 0 22 23"><rect x="1" y="1" width="20" height="21" rx="4" fill="none" stroke="#6a6a66" stroke-width="2"/><path d="M9 5h8v8H9zM5 9h8v9H5z" fill="#ececec" stroke="#6a6a66" stroke-width="1.800"/></svg><svg width="22" height="23" viewBox="0 0 22 23"><rect x="1" y="1" width="20" height="21" rx="4" fill="none" stroke="#6a6a66" stroke-width="2"/><path d="M6 6l10 11M16 6L6 17" stroke="#5c5c58" stroke-width="4"/></svg></span>`;
const check = svg`<path d="M8 15l5 8L21 5" fill="none" stroke="#222" stroke-width="3.200"></path>`;

@customElement("app-root")
export class AppRoot extends LitElement {
  static styles = css`
    :host { display: block; width: 2476px; height: 1842px; background: linear-gradient(135deg, #1d3c6e 0 30px, #b9b9b9 60px); font-family: Inter, "Noto Sans CJK KR", sans-serif; font-size: 25px; color: #262626; }
    * { box-sizing: border-box; }
    .k { font-family: "Noto Sans CJK KR", sans-serif; font-size: .98em; letter-spacing: -.05em; }
    svg { display: block; flex: none; overflow: visible; }
    .win { display: flex; flex-direction: column; width: 2476px; height: 1842px; border-radius: 22px; overflow: hidden; background: #ececec; }
    .title { position: relative; height: 57px; flex: none; display: flex; align-items: center; justify-content: center; background: #eef0f2; border-bottom: 1px solid #cfcfcf; font-weight: 700; font-size: 25px; letter-spacing: -.2px; color: #484848; padding-bottom: 2px; }
    .lights { position: absolute; left: 16px; top: 16px; display: flex; gap: 16px; }
    .lights i { width: 24px; height: 24px; border-radius: 50%; }
    .l1 { background: #ff5f57; border: 1px solid #e0443e; } .l2 { background: #febc2e; border: 1px solid #dea123; } .l3 { background: #28c840; border: 1px solid #1aab29; }
    .row { display: flex; flex: none; height: 77px; }
    .row.two { height: 78px; }
    .bar { display: flex; align-items: center; flex: none; padding-right: 7px; border-bottom: 2px solid #b5b5b5; background: linear-gradient(#f6f6f6, #eaeaea); box-shadow: inset -1px 0 0 #f3f3f3; }
    .grip { width: 25px; flex: none; display: flex; padding-left: 9px; }
    .grip i { width: 9px; height: 34px; background: radial-gradient(circle, #b9b9b9 1.100px, transparent 1.400px) 0 0 / 5px 7px; }
    .slot { width: 66px; height: 64px; flex: none; display: flex; align-items: center; justify-content: center; }
    .slot.narrow { width: 62px; justify-content: center; }
    .slot.on { position: relative; }
    .slot.on::before { content: ""; position: absolute; left: 2px; top: 1px; width: 63px; height: 61px; background: #d6d6d6; border: 2px solid #a8a8a8; border-radius: 5px; }
    .slot.on svg { position: relative; }
    .menu { width: 24px; flex: none; display: flex; padding-left: 2px; }
    .more { margin-left: auto; }
    .bar.tight { padding-right: 4px; }
    .main { display: flex; flex: none; height: 1569px; }
    .side { width: 827px; flex: none; display: flex; flex-direction: column; border-right: 1px solid #ababab; }
    .ptitle { display: flex; align-items: center; justify-content: space-between; padding: 0 3px 0 8px; width: 813px; height: 38px; font-size: 23px; color: #333; }
    .tbtns { display: flex; gap: 6px; }
    .tools { display: flex; align-items: center; gap: 19px; height: 62px; padding-left: 15px; }
    .tree { position: relative; width: 813px; background: #fff; border: 1px solid #b3b3b3; border-top: 2px solid #b3b3b3; display: flex; overflow: hidden; }
    .nodes { flex: 1; display: flex; flex-direction: column; overflow: hidden; }
    .node { height: 36px; flex: none; display: flex; align-items: center; white-space: pre; }
    .node.sel { background: #dcdcdc; width: 729px; color: #000; }
    .node .tw { width: 34px; display: flex; justify-content: center; flex: none; }
    .node .lab { margin-left: 13px; }
    .node .ic { margin-left: 5px; }
    .sb { width: 29px; border-left: 1px solid #b5b5b5; background: #e2e2e2; display: flex; flex-direction: column; }
    .sb div { display: flex; align-items: center; justify-content: center; flex: none; background: #fbfbfb; }
    .split { display: flex; justify-content: center; padding-top: 6px; height: 14px; width: 822px; }
    .split i { width: 33px; height: 4px; background: radial-gradient(circle, #aaa 1.200px, transparent 1.500px) 0 0 / 6px 4px; }
    .lrow { height: 36px; display: flex; align-items: center; padding-left: 47px; white-space: pre; width: 811px; flex: none; }
    .lrow.on { background: #0070ee; color: #fff; }
    .lrow .lab { margin-left: 12px; }
    .lrow.on .lab { border-bottom: 2px solid #fff; line-height: 27px; margin-top: 1px; }
    .cb { background: #fff; border: 2px solid #b5b5b5; border-radius: 2px; width: 28px; height: 28px; margin-right: 12px; display: flex; align-items: center; justify-content: center; flex: none; }
    .sw { width: 32px; height: 32px; display: flex; align-items: center; justify-content: center; }
    .canvas { flex: 1; display: flex; flex-direction: column; background: #fff; border-right: 1px solid #b0b0b0; border-bottom: 1px solid #ababab; }
    .msg { height: 73px; flex: none; background: #dbf0d5; border: 2px solid #86a083; display: flex; align-items: flex-start; overflow: hidden; color: #000; }
    .mtext { margin-left: 22px; width: 1385px; height: 46px; margin-top: 20px; overflow: hidden; line-height: 32px; font-size: 25px; white-space: pre; }
    .link { color: #008000; border-bottom: 2px solid #008000; line-height: 30px; display: inline-block; height: 29px; }
    .mspin { width: 28px; height: 56px; display: flex; flex-direction: column; margin-top: 11px; border-right: 2px solid #333; border-bottom: 2px solid #333; }
    .mspin div { flex: 1; display: flex; align-items: center; justify-content: center; background: #e3f0df; border-top: 2px solid #fff; border-left: 1px solid #fff; }
    .mspin div + div { border-top: 2px solid #555; }
    .land { fill: #78b868; stroke: #2a2a2a; stroke-width: 1.400; stroke-linejoin: round; }
    .edge { fill: none; stroke: #262626; stroke-width: 1.400; stroke-linejoin: round; }
    .dot { fill: #d72b2f; stroke: #262626; stroke-width: 1.200; }
    .status { flex: 1; display: flex; align-items: center; padding-left: 8px; font-size: 22px; color: #1a1a1a; white-space: pre; }
    .f { background: #fff; border: 2px solid #ababab; border-radius: 5px; height: 45px; display: flex; align-items: center; flex: none; font-size: 24px; overflow: hidden; color: #222; }
    .f.sm { height: 43px; }
    .search { width: 626px; height: 47px; color: #8b8b8b; padding-left: 14px; gap: 12px; font-size: 25px; }
    .clip { width: 218px; margin-left: 16px; overflow: hidden; flex: none; }
    .lb { flex: none; }
    .cap { margin-left: auto; align-self: stretch; border-left: 2px solid #b5b5b5; width: 38px; display: flex; flex-direction: column; align-items: center; justify-content: center; gap: 9px; background: #fafafa; flex: none; }
    .cap.n { width: 28px; }
  `;

  bar(b: Bar) {
    return html`<div class="bar ${b.more && b.narrow ? "tight" : ""}" style="${b.w ? `width:${b.w}px` : ""}">
      <div class="grip"><i></i></div>
      ${b.items.map((n) => n === "v"
        ? html`<div class="menu">${arrow("d", 16, 9)}</div>`
        : html`<div class="slot ${n === "hand" ? "on" : ""} ${b.narrow ? "narrow" : ""}">${icon(n)}</div>`)}
      ${b.more ? html`<svg class="more" width="18" height="14" viewBox="0 0 18 14"><path d="M2 1l5 6-5 6M10 1l5 6-5 6" fill="none" stroke="#444" stroke-width="2.200"/></svg>` : ""}
    </div>`;
  }

  render() {
    return html`
    <svg width="0" height="0" style="position:absolute"><defs></defs></svg>
    <div class="win">
      <div class="title"><span class="lights"><i class="l1"></i><i class="l2"></i><i class="l3"></i></span>*Lab03 — QGIS
        <svg width="0" height="0"><defs>
          <linearGradient id="lensg" x1="0" y1="0" x2="1" y2="1"><stop offset="0" stop-color="#fafafa"/><stop offset="1" stop-color="#dcdcdc"/></linearGradient>
          <linearGradient id="bluebox" x1="0" y1="0" x2="1" y2="1"><stop offset="0" stop-color="#f2f7fc"/><stop offset="1" stop-color="#7aa9d6"/></linearGradient>
        </defs></svg>
      </div>
      <div class="row">${row1.map((b) => this.bar(b))}</div>
      <div class="row two">${row2.map((b) => this.bar(b))}</div>
      <div class="main">
        <div class="side">
          <div class="ptitle">${ko("탐색기")}${box2}</div>
          <div class="tools">${["pAdd", "pRefresh", "pFilter", "pUp", "pInfo"].map((n) => icon(n, 31, 32))}</div>
          <div class="tree" style="height:517px">
            <div class="nodes">
              ${tree.map((n) => html`<div class="node ${n.sel ? "sel" : ""}" style="padding-left:${n.d * 32}px">
                <span class="tw">${n.a ? html`<svg width="16" height="16" viewBox="0 0 16 16"><path d="${n.a === "r" ? "M4 0v16l8-8z" : "M0 4h16l-8 8z"}" fill="#5a5a5a"/></svg>` : ""}</span>
                ${icon(n.i, 32, 32)}<span class="lab">${ko(n.t)}</span></div>`)}
            </div>
            <div class="sb"><div style="height:27px;border-bottom:2px solid #b5b5b5">${arrow("u", 15, 9)}</div><div style="height:92px;border-bottom:2px solid #b5b5b5"></div><div style="height:28px;margin-top:auto;border-top:2px solid #b5b5b5">${arrow("d", 15, 9)}</div></div>
          </div>
          <div class="split"><i></i></div>
          <div class="ptitle">${ko("레이어")}${box2}</div>
          <div class="tools">${["pBrush", "pGroup", "pEye", "pFilter2", "pEps"].map((n) => icon(n, 31, 32))}${arrow("d", 16, 9)}${["pDown", "pUp", "pRemove"].map((n) => icon(n, 31, 32))}</div>
          <div class="tree" style="height:839px;flex-direction:column">
            <div class="lrow on"><span class="cb"><svg width="28" height="28" viewBox="0 0 28 28">${check}</svg></span><span class="sw"><svg width="20" height="20"><circle cx="10" cy="10" r="9" fill="#d72b2f" stroke="#5a2020" stroke-width="1.500"/></svg></span><span class="lab">${ko("경상남도_진주시_공중화장실")}</span></div>
            <div class="lrow"><span class="cb"><svg width="28" height="28" viewBox="0 0 28 28">${check}</svg></span><span class="sw" style="background:#78b868;border:1.500px solid #3c5a34"></span><span class="lab">${ko("진주시")}</span></div>
          </div>
        </div>
        <div class="canvas">
          <div class="msg">
            <svg style="margin:18px 0 0 18px" width="47" height="34" viewBox="0 0 47 34"><path d="M0 3l13 15L46 1 11 33z" fill="#00e800" stroke="#0a7a0a" stroke-width="2"/></svg>
            <div class="mtext">${ko("레이어를 내보냄: ")}<span class="link">${ko("/Users/leekh/workspace/MegaitDataAnalysis/F.GIS/Lab03/진주시.shp")}</span>${ko("에 벡터 레이어를 성공적으로")}<br>${ko("저장했습니다")}</div>
            <div class="mspin"><div>${arrow("u", 10, 6)}</div><div>${arrow("d", 10, 6)}</div></div>
            <svg style="margin:16px 0 0 68px" width="34" height="34" viewBox="0 0 34 34"><circle cx="17" cy="17" r="16.500" fill="#333"/><path d="M10 10l14 14M24 10L10 24" stroke="#fff" stroke-width="4.500" stroke-linecap="round"/></svg>
          </div>
          <svg width="1647" height="1494" viewBox="828 285 1647 1494">${mapView()}</svg>
        </div>
      </div>
      <div class="status">
        <div class="f search"><svg width="28" height="28" viewBox="0 0 28 28"><circle cx="12" cy="11" r="8.500" fill="none" stroke="#8b8b8b" stroke-width="2"/><path d="M18 18l8 8" stroke="#8b8b8b" stroke-width="2.600"/></svg><span>${ko("위치를 찾으려면 입력하세요 (⌘K)")}</span></div>
        <div class="clip">${ko("%N개의 범례 항목 제거됨")}</div>
        <span class="lb" style="margin-left:18px;width:45px">${ko("좌표")}</span>
        <div class="f sm" style="width:209px;padding-left:18px">295881,273130</div>
        <svg style="margin-left:8px" width="30" height="34" viewBox="0 0 30 34"><path d="M4 4l6-2 6 12-4 6-6-2zM9 18l10-4 8 6-2 10-8 3-7-5z" fill="#fff" stroke="#111" stroke-width="2.600"/><path d="M9 5l5 10M12 22l7 5M2 16l5 4M19 8l6-4M20 12h7" stroke="#111" stroke-width="2"/></svg>
        <span class="lb" style="margin-left:26px;width:46px">${ko("축척")}</span>
        <div class="f" style="width:184px;height:47px;padding-left:6px">1:158335<span class="cap">${arrow("d", 15, 9)}</span></div>
        <svg style="margin-left:24px" width="24" height="32" viewBox="0 0 24 32"><path d="M5 14V8c0-8 14-8 14 0v6" fill="none" stroke="#8b8b86" stroke-width="3"/><rect x="0" y="13" width="24" height="18" rx="3" fill="#666"/></svg>
        <span class="lb" style="margin-left:19px;width:64px;-webkit-text-stroke:.4px">${ko("확대경")}</span>
        <div class="f" style="width:186px;padding-left:8px">100%<span class="cap n">${arrow("u", 16, 9)}${arrow("d", 16, 9)}</span></div>
        <span class="lb" style="margin-left:18px;width:56px">${ko("회전")}</span>
        <div class="f sm" style="width:185px;padding-left:8px">0.0 °<span class="cap n">${arrow("u", 16, 9)}${arrow("d", 16, 9)}</span></div>
        <span class="cb" style="margin:0 10px 0 13px"><svg width="28" height="28" viewBox="0 0 28 28">${check}</svg></span>
        <span class="lb" style="width:87px">${ko("렌더링")}</span>
        <svg style="margin-left:0" width="32" height="30" viewBox="0 0 32 30"><g fill="none" stroke="#777" stroke-width="2"><ellipse cx="16" cy="15" rx="11" ry="14"/><ellipse cx="16" cy="15" rx="5" ry="14"/><path d="M3 13h26M7 6h18M2 18h28M7 23h18"/></g></svg>
        <span class="lb" style="margin-left:6px;width:210px;color:#000">${ko("알 수 없는 좌표계")}</span>
        <svg width="34" height="34" viewBox="0 0 34 34"><path d="M17 1c21 0 21 23 9 25 0 4 3 6 3 6-7 0-9-2-11-5C-6 27-4 1 17 1z" fill="#636363"/><g fill="#fff"><circle cx="10" cy="14" r="2.400"/><circle cx="17" cy="14" r="2.400"/><circle cx="24" cy="14" r="2.400"/></g></svg>
      </div>
    </div>`;
  }
}
